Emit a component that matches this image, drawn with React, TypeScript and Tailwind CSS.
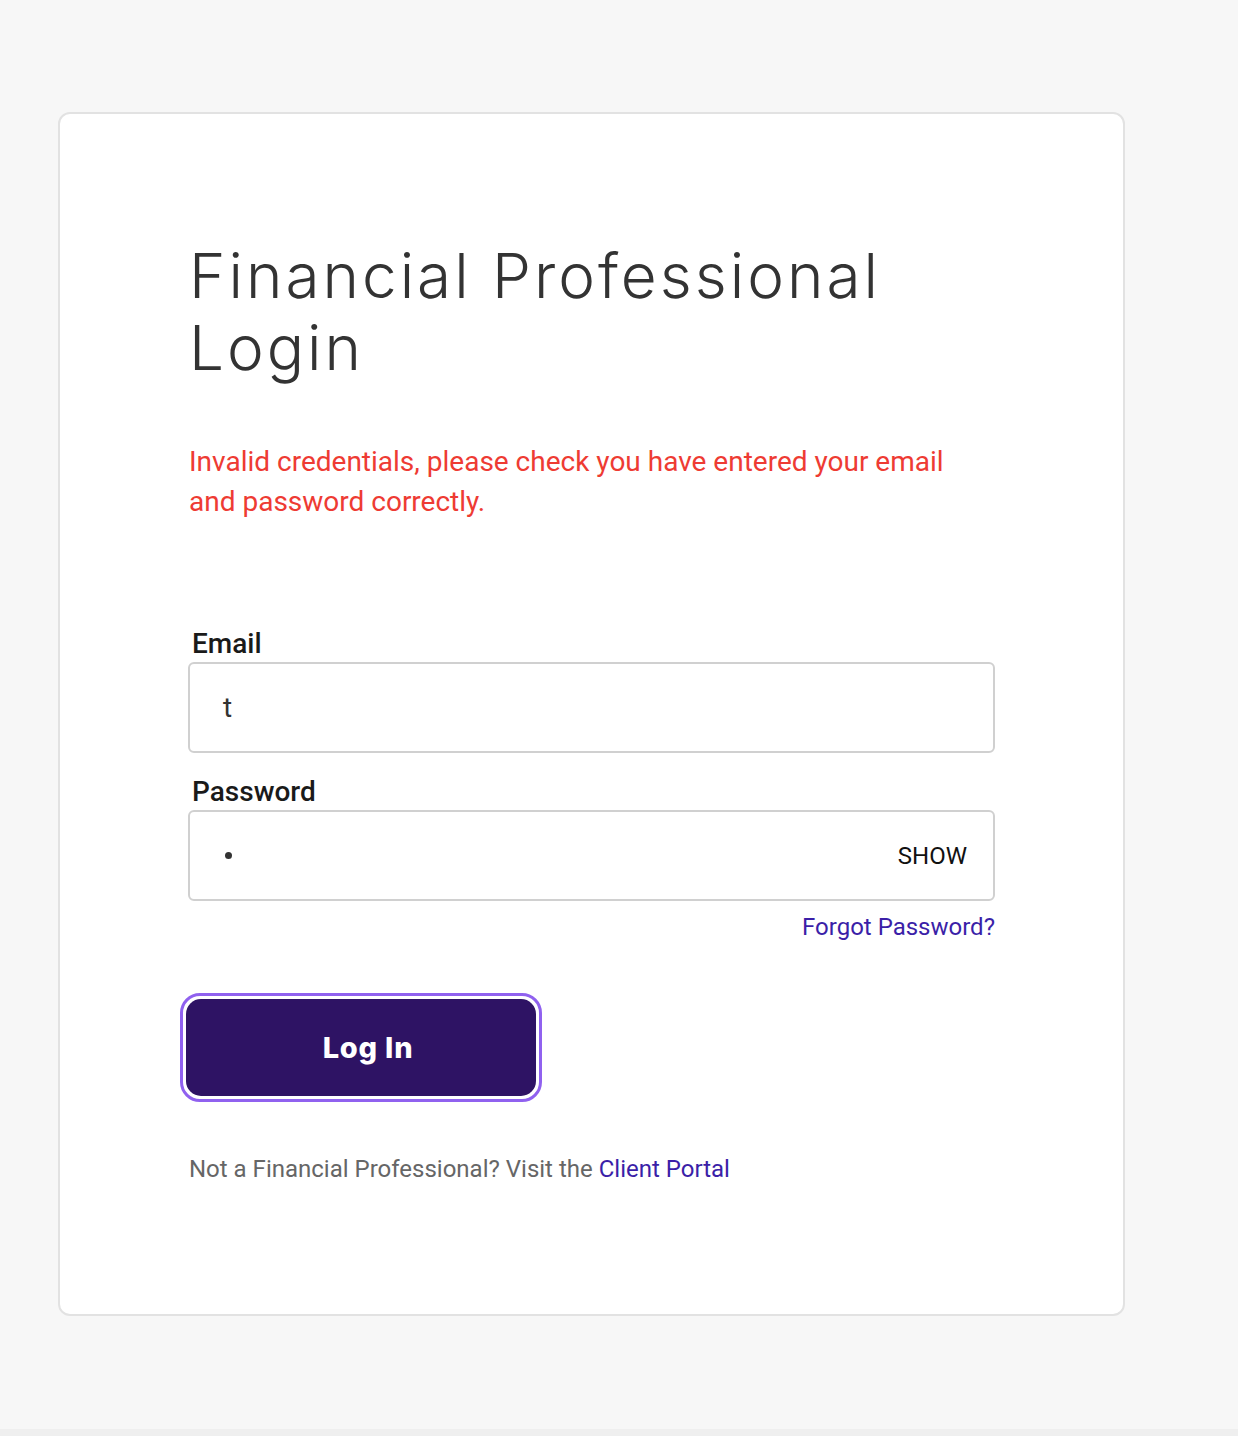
import React from "react";

export default function App() {
  return (
    <div className="w-full h-[1436px] bg-[#efefef]">
      <div className="h-[1429px] bg-[#f7f7f7] pt-[112px]">
        <div className="ml-[58px] w-[1067px] h-[1204px] bg-white border-2 border-[#e2e2e2] rounded-[12px] px-[128px] pt-[126px]">
          <h1
            className="pl-[1px] text-[62px] leading-[72px] font-light text-[#333333] tracking-[3px]"
            style={{ fontFamily: "Inter, 'Open Sans', sans-serif" }}
          >
            Financial Professional
            <br />
            Login
          </h1>
          <div style={{ fontFamily: "Roboto, 'Liberation Sans', sans-serif" }}>
            <p className="mt-[58px] pl-[1px] w-[780px] text-[28px] leading-[40px] text-[#ee3b33]">
              Invalid credentials, please check you have entered your email and password correctly.
            </p>
            <label className="block mt-[107px] pl-[4px] text-[28px] leading-[30px] font-medium text-[#1a1a1a]">
              Email
            </label>
            <div className="mt-[3px] h-[91px] border-2 border-[#d0d0d0] rounded-[6px] flex items-center pl-[33px] text-[28px] text-[#333333]">
              t
            </div>
            <label className="block mt-[24px] pl-[4px] text-[28px] leading-[30px] font-medium text-[#1a1a1a]">
              Password
            </label>
            <div className="mt-[3px] h-[91px] border-2 border-[#d0d0d0] rounded-[6px] flex items-center justify-between pl-[35px] pr-[26px]">
              <span className="w-[7px] h-[7px] rounded-full bg-[#333333]" />
              <span className="text-[24px] text-[#111111]">SHOW</span>
            </div>
            <div className="mt-[10px] text-right text-[24px] leading-[32px] text-[#3b1fa8]">
              Forgot Password?
            </div>
            <div className="mt-[50px] ml-[-8px] inline-block rounded-[20px] border-[3px] border-[#9061ef] p-[3px]">
              <button
                className="w-[350px] h-[97px] pl-[14px] rounded-[15px] bg-[#2e1364] text-white text-[29px] font-extrabold tracking-[0.8px]"
                style={{ fontFamily: "Inter, sans-serif" }}
              >
                Log In
              </button>
            </div>
            <p className="mt-[52px] pl-[1px] text-[24px] leading-[30px] text-[#666666]">
              Not a Financial Professional? Visit the <span className="text-[#3b1fa8]">Client Portal</span>
            </p>
          </div>
        </div>
      </div>
    </div>
  );
}
